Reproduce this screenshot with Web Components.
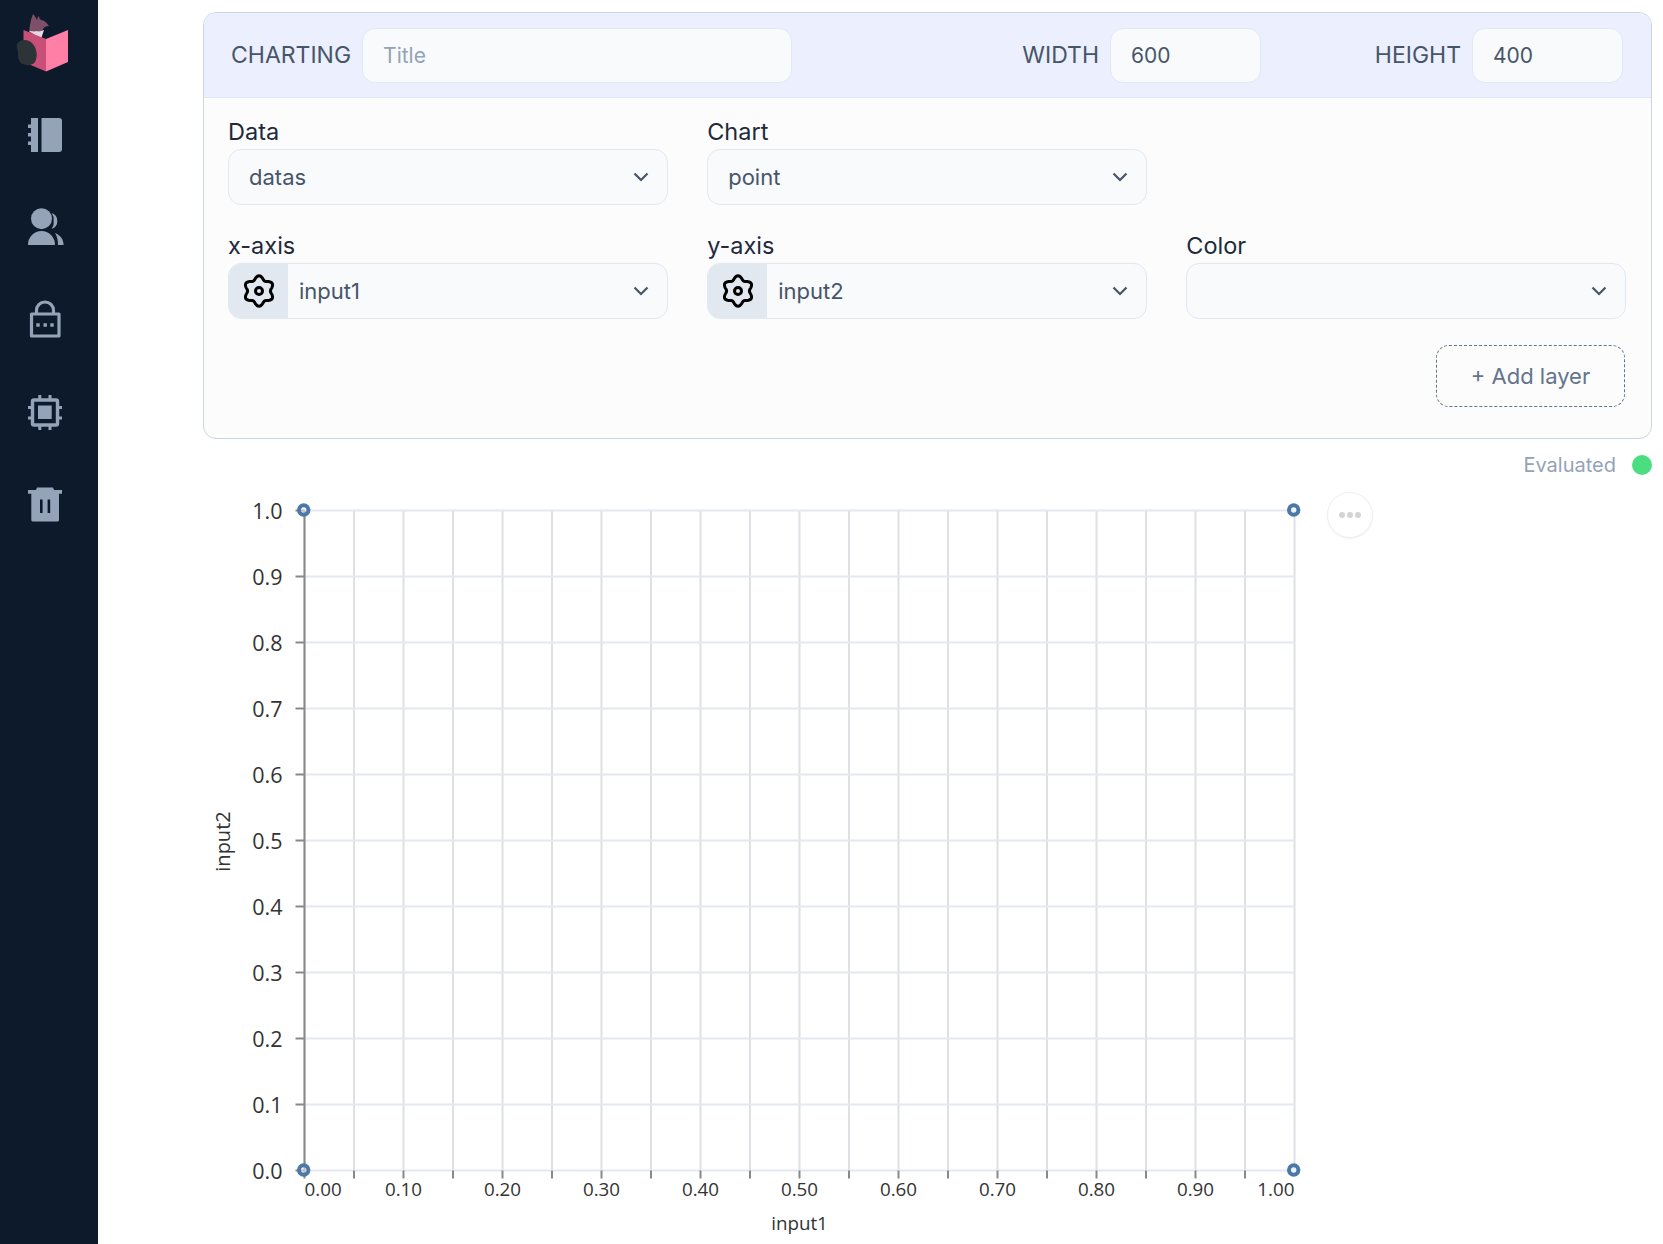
<!DOCTYPE html>
<html>
<head>
<meta charset="utf-8">
<title>Charting</title>
<style>
  html, body { margin: 0; padding: 0; background: #fff; }
  body { font-family: Inter, "Liberation Sans", sans-serif; }
</style>
</head>
<body>
<app-shell>
  <app-sidebar slot="nav"></app-sidebar>
  <chart-panel>
    <header-field slot="title" label="CHARTING" placeholder="Title" grow></header-field>
    <header-field slot="width" label="WIDTH" value="600"></header-field>
    <header-field slot="height" label="HEIGHT" value="400"></header-field>
    <select-field label="Data" value="datas"></select-field>
    <select-field label="Chart" value="point"></select-field>
    <span></span>
    <select-field label="x-axis" value="input1" gear></select-field>
    <select-field label="y-axis" value="input2" gear></select-field>
    <select-field label="Color"></select-field>
    <add-layer slot="actions"></add-layer>
  </chart-panel>
  <eval-status></eval-status>
  <chart-view></chart-view>
</app-shell>

<script>
class AppShell extends HTMLElement {
  constructor() {
    super();
    this.attachShadow({ mode: 'open' }).innerHTML = `
    <style>
      :host { display: flex; min-height: 1244px; }
      main { flex: 1; padding: 12px 11px 0 105px; min-width: 0; }
    </style>
    <slot name="nav"></slot>
    <main><slot></slot></main>`;
  }
}

class AppSidebar extends HTMLElement {
  constructor() {
    super();
    this.attachShadow({ mode: 'open' }).innerHTML = `
    <style>
      :host { display: flex; flex-direction: column; align-items: center; width: 98px; flex: none; background: #0d1a2b; }
      svg { display: block; }
      .logo { height: 86px; overflow: visible; }
      .item { height: 93px; display: flex; align-items: center; justify-content: center; width: 100%; }
      .item svg { fill: #94a3b8; margin-right: 10px; }
    </style>
    <svg class="logo" width="98" height="86" viewBox="0 0 98 86">
      <path d="M29 37c0-8 1-16 4-23 2 2 3 4 4 6 0-2 1-3 2-4 0 2 1 3 2 4 3 0 6 3 8 6-3 0-5 1-6 3l-3 7z" fill="#7d4f68"/>
      <path d="M29 31l12 8 3-9c-3 1-5 2-7 1-3 1-5 0-8 0z" fill="#e4dbe0"/>
      <path d="M23.500 30 46 39v32.500L23.500 62z" fill="#c94f78"/>
      <path d="M68 30 46 39v32.500L68 62z" fill="#ff7fa6"/>
      <path d="M17 44c3-5 11-5 15-1 5 5 6 13 3 19-3 4-10 4-14 1-3-3-3-7-3-11 0-3-2-5-1-8z" fill="#2c3437"/>
    </svg>
    <div class="item"><svg width="40" height="40" viewBox="0 0 40 40" style="margin-top:4px"><path d="M7 3h7v34H7zM17.500 3H35a3 3 0 0 1 3 3v28a3 3 0 0 1-3 3H17.500zM4 9.500h3V13H4zM4 18h3v3.500H4zM4 26.500h3V30H4z"/></svg></div>
    <div class="item"><svg width="40" height="40" viewBox="0 0 40 40"><circle cx="17.500" cy="12.700" r="10.500"/><path d="M4 39a13.500 14 0 0 1 27 0zM27.700 7a8.500 8.500 0 0 1 0 16 11.500 11.500 0 0 0 2-8 11.500 11.500 0 0 0-2-8zM31 27c5 2 8.600 6 8.600 12H34c0-5-1-9-3-12z"/></svg></div>
    <div class="item"><svg width="40" height="40" viewBox="0 0 40 40"><path d="M7.500 15h27.500v22H7.500zM12.500 15v-3.500a8.500 8.500 0 0 1 17 0V15" fill="none" stroke="#94a3b8" stroke-width="3.200" stroke-linejoin="round"/><path d="M12.300 24.300h3.400v3.400h-3.400zM19.500 24.300h3.400v3.400h-3.400zM26.300 24.300h3.400v3.400h-3.400z"/></svg></div>
    <div class="item"><svg width="40" height="40" viewBox="0 0 40 40"><rect x="8.500" y="8" width="25" height="25" rx="1.500" fill="none" stroke="#94a3b8" stroke-width="3.400"/><path d="M14 13.500h13.700V27H14zM14.300 3h3v4h-3zM24.500 3h3v4h-3zM14.300 34h3v4h-3zM24.500 34h3v4h-3zM4 14h4v3H4zM4 24.500h4v3H4zM34 14h4v3h-4zM34 24.500h4v3h-4z"/></svg></div>
    <div class="item"><svg width="40" height="40" viewBox="0 0 40 40"><path fill-rule="evenodd" d="M12 5 13 2.500h16L30 5h8v3.700h-3V35a1.600 1.600 0 0 1-1.600 1.600H8.900A1.600 1.600 0 0 1 7.300 35V8.700H4V5zM16 14.500V28h2.600V14.500zM23.600 14.500V28h2.600V14.500z"/></svg></div>`;
  }
}

class ChartPanel extends HTMLElement {
  constructor() {
    super();
    this.attachShadow({ mode: 'open' }).innerHTML = `
    <style>
      :host { display: block; width: 1449px; height: 427px; box-sizing: border-box; border: 1px solid #cbd5e1; border-radius: 13px; background: #fcfcfd; overflow: hidden; }
      header { display: flex; align-items: center; height: 85px; box-sizing: border-box; padding: 0 28px 0 27px; background: #ebeffe; border-bottom: 1px solid #e2e8f0; }
      .title { flex: 1; display: flex; }
      .size { display: flex; width: 362px; justify-content: flex-end; }
      .body { padding: 18px 25px 0 24px; }
      .grid { display: grid; grid-template-columns: repeat(3, 1fr); column-gap: 39.500px; row-gap: 25px; }
      .actions { display: flex; justify-content: flex-end; margin-top: 26px; padding-right: 1px; }
    </style>
    <header>
      <div class="title"><slot name="title"></slot></div>
      <div class="size"><slot name="width"></slot></div>
      <div class="size"><slot name="height"></slot></div>
    </header>
    <div class="body">
      <div class="grid"><slot></slot></div>
      <div class="actions"><slot name="actions"></slot></div>
    </div>`;
  }
}

class HeaderField extends HTMLElement {
  constructor() {
    super();
    const label = this.getAttribute('label');
    const placeholder = this.getAttribute('placeholder');
    const value = this.getAttribute('value');
    this.attachShadow({ mode: 'open' }).innerHTML = `
    <style>
      :host { display: flex; align-items: center; gap: 11px; color: #475569; font-size: 23px; }
      .box { box-sizing: border-box; height: 55px; width: 151px; padding: 0 20px; display: flex; align-items: center; background: #f8fafc; border: 1px solid #e2e8f0; border-radius: 13px; font-size: 21px; }
      :host([grow]) .box { width: 430px; color: #94a3b8; }
    </style>
    <span>${label}</span>
    <div class="box">${value || placeholder}</div>`;
  }
}

class SelectField extends HTMLElement {
  constructor() {
    super();
    const label = this.getAttribute('label');
    const value = this.getAttribute('value') || '';
    this.attachShadow({ mode: 'open' }).innerHTML = `
    <style>
      :host { display: block; min-width: 0; }
      label { display: block; height: 33px; line-height: 32px; color: #1e293b; font-size: 23.500px; }
      .box { box-sizing: border-box; height: 56px; display: flex; align-items: center; background: #f8fafc; border: 1px solid #e2e8f0; border-radius: 13px; color: #475569; font-size: 22px; overflow: hidden; }
      .val { flex: 1; padding-left: 20px; }
      .addon { flex: none; width: 59px; height: 100%; display: flex; align-items: center; justify-content: center; background: #e2e8f0; }
      .addon + .val { padding-left: 11px; }
      .chev { flex: none; margin-right: 18px; }
    </style>
    <label>${label}</label>
    <div class="box">
      ${this.hasAttribute('gear') ? `<span class="addon"><svg width="34" height="34" viewBox="0 0 34 34" fill="none" stroke="#000" stroke-width="3" stroke-linejoin="round"><path d="${gearPath()}"/><circle cx="17" cy="17" r="3.500"/></svg></span>` : ''}
      <span class="val">${value}</span>
      <svg class="chev" width="16" height="10" viewBox="0 0 16 10" fill="none" stroke="#475569" stroke-width="2.200"><path d="M1.500 1.500 8 8l6.500-6.500"/></svg>
    </div>`;
  }
}

// wavy six-lobe outline of the gear
function gearPath() {
  let d = '';
  for (let i = 0; i < 120; i++) {
    const a = i / 120 * Math.PI * 2;
    const r = 13.3 + 1.9 * Math.cos(6 * a);
    d += (i ? 'L' : 'M') + (17 + r * Math.sin(a)).toFixed(2) + ' ' + (17 - r * Math.cos(a)).toFixed(2);
  }
  return d + 'Z';
}

class AddLayer extends HTMLElement {
  constructor() {
    super();
    this.attachShadow({ mode: 'open' }).innerHTML = `
    <style>
      :host { display: inline-flex; align-items: center; justify-content: center; box-sizing: border-box; width: 189px; height: 62px; border: 1px dashed #64748b; border-radius: 13px; color: #64748b; font-size: 22px; }
    </style>
    + Add layer`;
  }
}

class EvalStatus extends HTMLElement {
  constructor() {
    super();
    this.attachShadow({ mode: 'open' }).innerHTML = `
    <style>
      :host { display: flex; align-items: center; justify-content: flex-end; gap: 16px; height: 52px; color: #94a3b8; font-size: 20px; }
      i { width: 20px; height: 20px; border-radius: 50%; background: #4ade80; }
    </style>
    <span>Evaluated</span><i></i>`;
  }
}

class ChartView extends HTMLElement {
  constructor() {
    super();
    const left = 101.5, top = 19.5, w = 990, h = 660;
    let grid = '', ticks = '', labels = '';
    for (let i = 0; i <= 20; i++) {
      const x = left + w * i / 20;
      grid += `<path d="M${x} ${top}V${top + h}" stroke="#dee0e4" stroke-width="2"/>`;
      if (i > 0 && i < 20) ticks += `<path d="M${x} ${top + h}v8" stroke="#888" stroke-width="2"/>`;
      if (i % 2 === 0) {
        const anchor = i === 0 ? 'start' : i === 20 ? 'end' : 'middle';
        labels += `<text x="${x}" y="${top + h + 25.5}" text-anchor="${anchor}" font-size="18.800">${(i / 20).toFixed(2)}</text>`;
      }
    }
    for (let i = 0; i <= 10; i++) {
      const y = top + h - h * i / 10;
      grid += `<path d="M${left} ${y}H${left + w}" stroke="#e4e8f1" stroke-width="2"/>`;
      ticks += `<path d="M${left - 9} ${y}h9" stroke="#888" stroke-width="2"/>`;
      labels += `<text x="${left - 22}" y="${y + 8}" text-anchor="end" font-size="21.500">${(i / 10).toFixed(1)}</text>`;
    }
    const pts = [[left, top], [left + w, top], [left, top + h], [left + w, top + h]]
      .map(p => `<circle cx="${p[0] - 0.8}" cy="${p[1] - 0.5}" r="4.700" fill="#eef2f7" fill-opacity="0.500" stroke="#4c78a8" stroke-width="4"/>`).join('');
    this.attachShadow({ mode: 'open' }).innerHTML = `
    <style>
      :host { display: flex; align-items: flex-start; }
      svg { display: block; flex: none; font-family: "Open Sans", "Noto Sans", sans-serif; fill: #333; }
      .more { flex: none; box-sizing: border-box; width: 46px; height: 46px; margin: 1px 0 0 14px; display: flex; align-items: center; justify-content: center; gap: 2px; background: #fff; border: 1px solid #eee; border-radius: 50%; box-shadow: 0 1px 2px rgba(0,0,0,.05); }
      .more i { width: 6px; height: 6px; border-radius: 50%; background: #d4d4d4; }
    </style>
    <svg width="1110" height="754" viewBox="0 0 1110 754">
      ${grid}${ticks}
      <path d="M${left} ${top}V${top + h + 8}" stroke="#888" stroke-width="2"/>
      ${pts}${labels}
      <text x="${left + w / 2}" y="${top + h + 59}" text-anchor="middle" font-size="18.800">input1</text>
      <text transform="translate(27 ${top + h / 2 + 1}) rotate(-90)" text-anchor="middle" font-size="20">input2</text>
    </svg>
    <div class="more"><i></i><i></i><i></i></div>`;
  }
}

customElements.define('app-shell', AppShell);
customElements.define('app-sidebar', AppSidebar);
customElements.define('chart-panel', ChartPanel);
customElements.define('header-field', HeaderField);
customElements.define('select-field', SelectField);
customElements.define('add-layer', AddLayer);
customElements.define('eval-status', EvalStatus);
customElements.define('chart-view', ChartView);
</script>
</body>
</html>
